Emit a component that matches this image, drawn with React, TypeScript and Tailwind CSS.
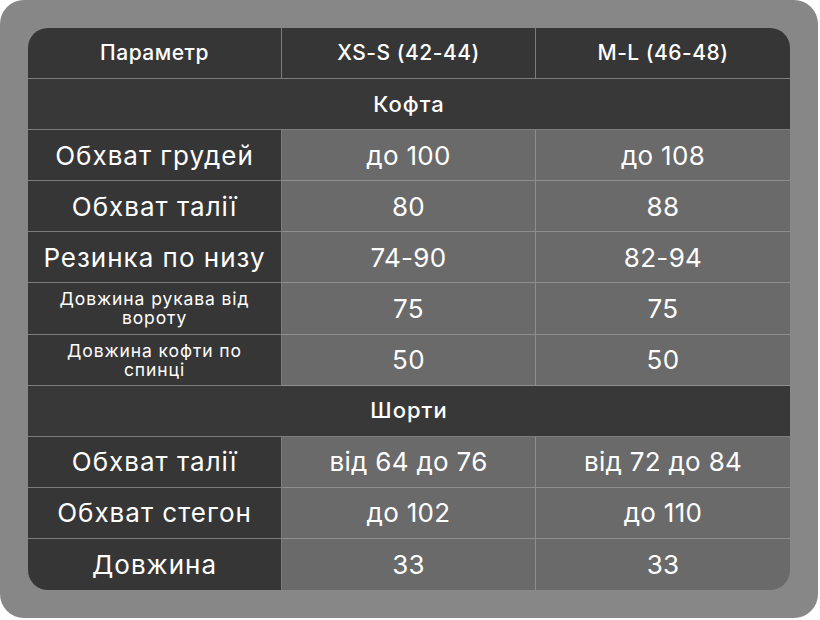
const rows: (string | [string, string, string, boolean?])[] = [
  'Кофта',
  ['Обхват грудей', 'до 100', 'до 108'],
  ['Обхват талії', '80', '88'],
  ['Резинка по низу', '74-90', '82-94'],
  ['Довжина рукава від вороту', '75', '75', true],
  ['Довжина кофти по спинці', '50', '50', true],
  'Шорти',
  ['Обхват талії', 'від 64 до 76', 'від 72 до 84'],
  ['Обхват стегон', 'до 102', 'до 110'],
  ['Довжина', '33', '33'],
]

export default function App() {
  return (
    <div className="w-[820px] h-[620px] bg-white">
      <div className="w-[818px] h-[618px] rounded-[24px] bg-[#878787] p-[28px]">
        <div
          className="grid h-full grid-cols-3 grid-rows-[repeat(11,1fr)] overflow-hidden rounded-[20px] text-white"
          style={{ fontFamily: 'Inter, "Noto Sans", sans-serif' }}
        >
          {['Параметр', 'XS-S (42-44)', 'M-L (46-48)'].map((h, i) => (
            <div
              key={h}
              className={`flex items-center justify-center border-b border-[#7c7c7c] bg-[#363636] text-[21px] font-medium tracking-[0.5px] ${i < 2 ? 'border-r' : ''}`}
            >
              {h}
            </div>
          ))}
          {rows.map((r, idx) => {
            const last = idx === rows.length - 1
            if (typeof r === 'string') {
              return (
                <div
                  key={r}
                  className="col-span-3 flex items-center justify-center border-b border-[#7c7c7c] bg-[#383838] text-[22px] font-medium tracking-[1px]"
                >
                  {r}
                </div>
              )
            }
            const [label, a, b, small] = r
            return [
              <div
                key={idx + 'l'}
                className={`flex items-center justify-center border-r border-[#7c7c7c] bg-[#363636] text-center ${last ? '' : 'border-b'} ${small ? 'px-[26px] text-[17.5px] leading-[19px] tracking-[0.9px]' : 'text-[26px] tracking-[1px]'}`}
              >
                {label}
              </div>,
              <div
                key={idx + 'a'}
                className={`flex items-center justify-center border-r border-[#8e8e8e] bg-[#6a6a6a] text-[26px] tracking-[0.3px] ${last ? '' : 'border-b'}`}
              >
                {a}
              </div>,
              <div
                key={idx + 'b'}
                className={`flex items-center justify-center border-[#8e8e8e] bg-[#6a6a6a] text-[26px] tracking-[0.3px] ${last ? '' : 'border-b'}`}
              >
                {b}
              </div>,
            ]
          })}
        </div>
      </div>
    </div>
  )
}
